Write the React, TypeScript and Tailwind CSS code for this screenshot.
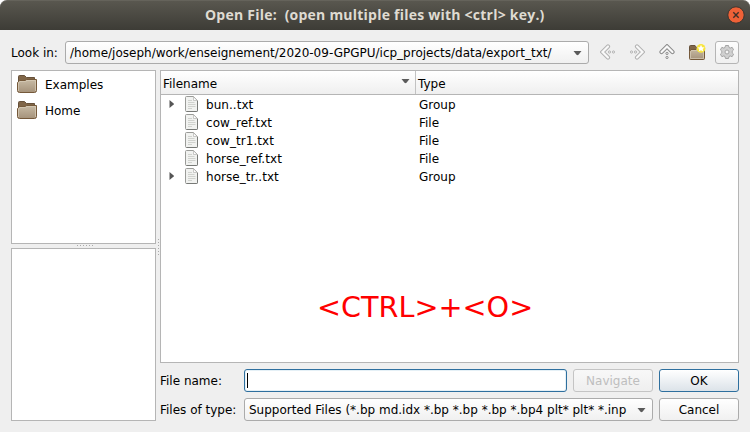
import React from 'react';

const files = [
  { name: 'bun..txt', type: 'Group' },
  { name: 'cow_ref.txt', type: 'File' },
  { name: 'cow_tr1.txt', type: 'File' },
  { name: 'horse_ref.txt', type: 'File' },
  { name: 'horse_tr..txt', type: 'Group' },
];

function Folder({ star = false }: { star?: boolean }) {
  return (
    <svg
      className={star ? 'h-[18px] w-[18px] shrink-0' : 'h-5 w-[22px] shrink-0'}
      viewBox={star ? '0 0 18 18' : '0 0 22 20'}
      fill="none"
    >
      <defs>
        <linearGradient id="folder" x1="0" y1="0" x2="0" y2="1">
          <stop offset="0" stopColor="#c8bba5" />
          <stop offset="1" stopColor="#a5927a" />
        </linearGradient>
      </defs>
      {star ? (
        <>
          <path d="M1.5 14V3.5Q1.5 2.5 2.5 2.5H7L8.5 4.5H15.5V14Z" fill="#806648" stroke="#66513b" />
          <path d="M1.5 15.5V8.5L3 6.5H8L9 5.5H16.5V15.5Q16.5 16.5 15.5 16.5H2.5Q1.5 16.5 1.5 15.5Z" fill="url(#folder)" stroke="#75593a" />
          <path d="M2.5 15.5V8.8L3.5 7.5H8.5L9.5 6.5H15.5V15.5Z" stroke="#d8cdb9" strokeOpacity=".7" />
          <circle cx="13" cy="5.4" r="4.4" fill="#f8e53d" />
          <path d="M13 1.8L14.1 4.2L16.6 4.4L14.7 6.1L15.3 8.6L13 7.3L10.7 8.6L11.3 6.1L9.4 4.4L11.9 4.2Z" fill="white" />
        </>
      ) : (
        <>
          <path d="M2.5 15V2.5Q2.5 1.5 3.5 1.5H8.5L10.5 3.5H18.5V15Z" fill="#806648" stroke="#66513b" />
          <path d="M1.5 16.5V8.5L3.5 6.5H9L10.5 5.5H20.5V16.5Q20.5 18.5 18.5 18.5H3.5Q1.5 18.5 1.5 16.5Z" fill="url(#folder)" stroke="#75593a" />
          <path d="M2.5 17V9L4 7.5H9.5L11 6.5H19.5V17" stroke="#d8cdb9" strokeOpacity=".7" />
        </>
      )}
    </svg>
  );
}

function FileIcon() {
  return (
    <svg className="h-4 w-[14px] shrink-0" viewBox="0 0 14 16" fill="none">
      <path d="M1.5.5H8.5L12.5 4.5V14.5Q12.5 15.5 11.5 15.5H1.5Q.5 15.5.5 14.5V1.5Q.5.5 1.5.5Z" fill="#f1f2f0" stroke="#9a9b98" />
      <path d="M12.5 5V14.5Q12.5 15.5 11.5 15.5H1.5" stroke="#777976" />
      <path d="M8.5.8V4.5H12.2Z" fill="white" stroke="#b4b5b2" strokeWidth=".7" />
      <path d="M3 4.5H7M3 6.5H9.5M3 8.5H10.5M3 10.5H10.5M3 12.5H7" stroke="#d0d2ce" />
    </svg>
  );
}

function Nav({ className }: { className: string }) {
  return (
    <svg className={'h-4 w-4 shrink-0 ' + className} viewBox="0 0 16 16" fill="none">
      <path d="M8 2.5L2.5 8L8 13.5" stroke="currentColor" strokeWidth="4.2" strokeLinecap="round" />
      <path d="M8 2.5L2.5 8L8 13.5" stroke="#f9f9f9" strokeWidth="2.2" strokeLinecap="round" />
      <circle cx="9.5" cy="8" r="1.1" fill="#f5f5f5" stroke="currentColor" />
      <circle cx="13.5" cy="8" r="1.1" fill="#f5f5f5" stroke="currentColor" />
    </svg>
  );
}

function Down() {
  return (
    <svg className="h-[5px] w-[9px] shrink-0" viewBox="0 0 9 5">
      <path d="M.5 0H8.5L5.5 3.8Q4.5 4.6 3.5 3.8Z" fill="#5b5b5b" />
    </svg>
  );
}

export default function App() {
  return (
    <div className="h-[432px] w-[750px] overflow-hidden bg-white font-['DejaVu_Sans',sans-serif] text-[12px] leading-4 text-black">
      <div className="flex h-full flex-col rounded-t-[7px] bg-[#efefef]">
        <header className="flex h-[30px] items-center rounded-t-[7px] border-t border-[#65635b] bg-gradient-to-b from-[#59574f] to-[#3d3c36]">
          <h1 className="ml-[205px] grow whitespace-pre pb-px font-['Open_Sans',sans-serif] text-[14px] font-bold tracking-[0.23px] text-[#dfdbd2]">Open File:  (open multiple files with &lt;ctrl&gt; key.)</h1>
          <svg className="mr-[5px] mb-px h-[18px] w-[18px]" viewBox="0 0 18 18">
            <circle cx="9" cy="9" r="8.2" fill="#ee6137" stroke="#38352f" />
            <path d="M6.3 6.3L11.7 11.7M11.7 6.3L6.3 11.7" stroke="#3d3029" strokeWidth="1.4" />
          </svg>
        </header>

        <div className="mt-[11px] flex h-[23px] items-center pl-[11px]">
          <span className="w-[54px] whitespace-nowrap">Look in:</span>
          <div className="flex h-[23px] w-[524px] items-center justify-between rounded-[3px] border border-[#ababab] bg-gradient-to-b from-white to-[#f0f0f0] pr-[6px] pl-1">
            <span className="whitespace-nowrap">/home/joseph/work/enseignement/2020-09-GPGPU/icp_projects/data/export_txt/</span>
            <span className="flex pt-px"><Down /></span>
          </div>
          <Nav className="ml-[11px] mb-[2px] text-[#b2b2b2]" />
          <Nav className="ml-[13px] mb-[2px] rotate-180 text-[#b2b2b2]" />
          <Nav className="ml-[14px] mb-[2px] rotate-90 text-[#8b8b8b]" />
          <div className="mb-px ml-[13px] flex"><Folder star /></div>
          <div className="ml-[9px] flex h-[23px] w-6 items-center justify-center rounded-[3px] border border-[#b5b5b5] bg-gradient-to-b from-[#fdfdfd] to-[#f0f0f0] pb-px">
            <svg className="h-4 w-4" viewBox="0 0 16 16" fill="#d0d0d0" stroke="#a5a5a5">
              <path d="M6.5 1.5h3l.5 2 1.2.6 1.9-.8 1.5 2.5-1.4 1.4v1.6l1.4 1.4-1.5 2.5-1.9-.8-1.2.6-.5 2h-3L6 12.5l-1.2-.6-1.9.8-1.5-2.5 1.4-1.4V7.2L1.4 5.8l1.5-2.5 1.9.8L6 3.5Z" strokeLinejoin="round" />
              <circle cx="8" cy="8" r="2" fill="#f5f5f5" />
            </svg>
          </div>
        </div>

        <main className="mt-[6px] flex h-[351px] pl-[11px]">
          <aside className="flex w-[145px] flex-col">
            <div className="h-[174px] border border-[#b5b5b5] bg-white">
              {['Examples', 'Home'].map((place) => (
                <div key={place} className="flex h-[26px] items-center gap-[7px] pl-1">
                  <Folder />
                  <span className="pt-px">{place}</span>
                </div>
              ))}
            </div>
            <div className="flex h-1 items-start justify-center gap-[2px] pt-px pl-[3px]">
              {[0, 1, 2, 3, 4, 5].map((i) => <i key={i} className="size-px bg-[#aaa]" />)}
            </div>
            <div className="h-[173px] border border-[#b5b5b5] bg-white" />
          </aside>

          <div className="flex w-1 flex-col items-center gap-[2px] pt-[169px] pl-px">
            {[0, 1, 2, 3, 4, 5].map((i) => <i key={i} className="size-px bg-[#aaa]" />)}
          </div>

          <section className="flex w-[579px] flex-col">
            <div className="h-[293px] border border-[#b5b5b5] bg-white">
              <div className="flex h-6 border-b border-[#b5b5b5] bg-gradient-to-b from-white to-[#efefef]">
                <div className="flex w-[255px] justify-between border-r border-[#c2c2c2] pt-[5px] pr-[5px] pl-[2px]">
                  <span>Filename</span>
                  <span className="pt-[3px]"><Down /></span>
                </div>
                <span className="pt-[5px] pl-[2px]">Type</span>
              </div>
              {files.map((file) => (
                <div key={file.name} className="flex h-[18px] items-center">
                  <span className="flex w-6 pl-[8px]">
                    {file.type === 'Group' && (
                      <svg className="h-2 w-[5px]" viewBox="0 0 5 8"><path d="M.5 0L4.7 3.5Q5.1 4 4.7 4.5L.5 8Z" fill="#555" /></svg>
                    )}
                  </span>
                  <FileIcon />
                  <span className="ml-[7px] w-[213px] pt-[2px] tracking-[0.05px]">{file.name}</span>
                  <span className="pt-[2px]">{file.type}</span>
                </div>
              ))}
              <p className="mt-[101px] ml-[156px] whitespace-nowrap text-[28.7px] leading-[42px] text-[#ff0000]">&lt;CTRL&gt;+&lt;O&gt;</p>
            </div>

            <div className="mt-[6px] flex h-[23px] items-center">
              <label htmlFor="filename" className="w-[84px]">File name:</label>
              <div id="filename" className="flex h-[23px] w-[323px] items-center rounded-[3px] border border-[#2e6f9e] bg-white pl-[2px] shadow-[inset_0_0_0_1px_#e5f0f6]">
                <i className="h-[15px] w-px bg-black" />
              </div>
              <button className="ml-[6px] h-[23px] w-20 rounded-[3px] border border-[#c4c4c4] bg-gradient-to-b from-[#f8f8f8] to-[#efefef] text-[#bebebe]">Navigate</button>
              <button className="ml-[6px] h-[23px] w-20 rounded-[3px] border border-[#2e6f9e] bg-gradient-to-b from-white to-[#dce3e9]">OK</button>
            </div>
            <div className="mt-[6px] flex h-[23px] items-center">
              <span className="w-[84px] whitespace-nowrap">Files of type:</span>
              <div className="flex h-[23px] w-[409px] items-center justify-between rounded-[3px] border border-[#ababab] bg-gradient-to-b from-white to-[#f0f0f0] pr-[6px] pl-1">
                <span className="whitespace-nowrap">Supported Files (*.bp md.idx *.bp *.bp *.bp *.bp4 plt* plt* *.inp</span>
                <span className="flex pt-px"><Down /></span>
              </div>
              <button className="ml-[6px] h-[23px] w-20 rounded-[3px] border border-[#ababab] bg-gradient-to-b from-white to-[#f0f0f0]">Cancel</button>
            </div>
          </section>
        </main>
      </div>
    </div>
  );
}
